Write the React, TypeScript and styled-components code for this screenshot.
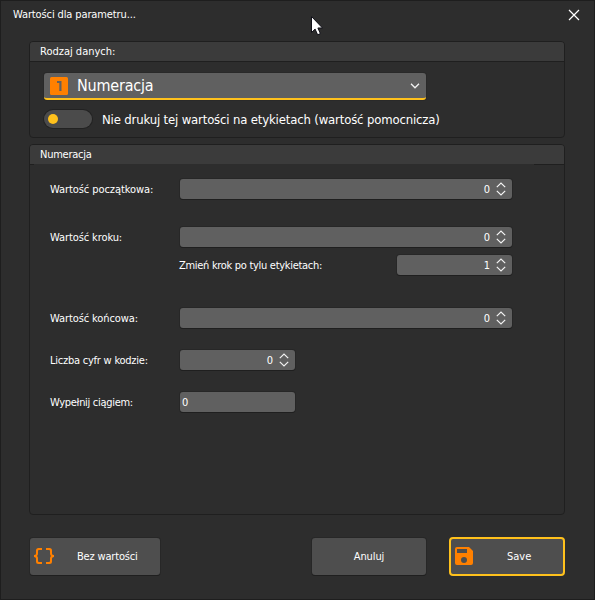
import React from 'react';
import styled, { createGlobalStyle } from 'styled-components';

const GlobalStyle = createGlobalStyle`
  * { box-sizing: border-box; }
  body { margin: 0; background: #2d2d2d; }
`;

const Dialog = styled.div`
  position: relative;
  width: 595px;
  height: 600px;
  background: #2d2d2d;
  border: 1px solid #1e1e1e;
  color: #fff;
  font: 11px/16px "DejaVu Sans Condensed", "Noto Sans", sans-serif;
  display: flex;
  flex-direction: column;
  overflow: hidden;
`;

const TitleBar = styled.header`
  height: 40px;
  flex: none;
  display: flex;
  justify-content: space-between;
  padding: 6px 14px 0 12px;
`;

const CloseButton = styled.button`
  width: 12px;
  height: 12px;
  margin-top: 2px;
  padding: 0;
  border: 0;
  background: none;
  svg { display: block; }
`;

const Text = styled.span<{ $track?: number }>`
  letter-spacing: ${p => p.$track ?? 0}px;
  white-space: nowrap;
`;

const Panel = styled.section<{ $height: number }>`
  width: 536px;
  height: ${p => p.$height}px;
  flex: none;
  margin: 0 0 6px 28px;
  border: 1px solid #1f1f1f;
  border-radius: 4px;
  overflow: hidden;
`;

const PanelHeader = styled.div<{ $broken?: boolean }>`
  height: 20px;
  padding: 2px 0 0 10px;
  background: ${p => p.$broken
    ? 'linear-gradient(90deg, #1f1f1f 4px, #3b3b3b00 4px, #3b3b3b00 504px, #1f1f1f 504px) 0 19px / 100% 1px no-repeat, linear-gradient(#3b3b3b, #3b3b3b) 0 0 / 100% 19px no-repeat'
    : 'linear-gradient(#1f1f1f, #1f1f1f) 0 19px / 100% 1px no-repeat, #3b3b3b'};
`;

const TypeBody = styled.div`
  padding: 11px 0 0 14px;
`;

const Select = styled.div`
  width: 382px;
  height: 27px;
  display: flex;
  align-items: center;
  padding: 0 6px 0 6px;
  background: #606060;
  border-radius: 3px;
  border-bottom: 2px solid #ffc11c;
  box-shadow: 0 0 0 1px #292929;
  font: 16px/24px "DejaVu Sans Condensed", "Noto Sans", sans-serif;
  svg { display: block; flex: none; }
`;

const SelectLabel = styled.span`
  flex: 1;
  padding: 1px 0 0 9px;
  letter-spacing: -0.2px;
`;

const ToggleRow = styled.label`
  display: flex;
  align-items: center;
  height: 20px;
  margin-top: 9px;
  font-size: 13px;
  gap: 10px;
  ${Text} { padding-top: 2px; }
`;

const Toggle = styled.span`
  width: 48px;
  height: 18px;
  padding: 4px;
  border-radius: 9px;
  background: #4b4b4b;
  flex: none;
  box-shadow: 0 0 0 1px #222;
  &::after {
    content: "";
    display: block;
    width: 10px;
    height: 10px;
    border-radius: 50%;
    background: #ffc11c;
  }
`;

const FormBody = styled.div`
  padding: 14px 0 0 20px;
`;

const FormRow = styled.div<{ $gap: number }>`
  display: grid;
  grid-template-columns: 130px 332px;
  height: 20px;
  align-items: center;
  margin-bottom: ${p => p.$gap}px;
  ${Text} { padding-top: 1px; line-height: 17px; }
`;

const NestedRow = styled.div`
  grid-column: 2;
  display: flex;
  justify-content: space-between;
  align-items: center;
  margin-left: -1px;
`;

const Field = styled.div<{ $width: number; $left?: boolean }>`
  width: ${p => p.$width}px;
  height: 20px;
  display: flex;
  align-items: center;
  justify-content: ${p => (p.$left ? 'flex-start' : 'flex-end')};
  gap: 6px;
  padding: ${p => (p.$left ? '0 2px' : '0 6px 0 0')};
  border-radius: 3px;
  background: #606060;
  box-shadow: 0 1px 0 #1f1f1f, 0 0 0 1px #272727;
`;

const Footer = styled.footer`
  display: flex;
  align-items: center;
  height: 40px;
  margin: 15px 0 0 29px;
`;

const Button = styled.button<{ $width: number; $primary?: boolean; $offset?: number; $pad?: number }>`
  width: ${p => p.$width}px;
  height: ${p => (p.$primary ? 39 : 37)}px;
  margin: 0 0 0 ${p => p.$offset ?? 0}px;
  padding: 0 0 0 ${p => p.$pad ?? 0}px;
  display: flex;
  align-items: center;
  justify-content: ${p => (p.$pad === undefined ? 'center' : 'flex-start')};
  border: ${p => (p.$primary ? '2px solid #ffc11c' : '0')};
  border-radius: ${p => (p.$primary ? 4 : 3)}px;
  background: #4e4e4e;
  box-shadow: ${p => (p.$primary ? 'none' : '0 1px 0 #1f1f1f, 0 0 0 1px #272727')};
  color: inherit;
  font: inherit;
  svg { display: block; flex: none; }
  ${Text} { padding-top: 2px; }
`;

const ButtonText = styled(Text)<{ $indent: number }>`
  margin-left: ${p => p.$indent}px;
  padding-top: 2px;
`;

const Cursor = styled.svg`
  position: absolute;
  left: 310px;
  top: 15px;
`;

const Arrows = () => (
  <svg width="10" height="14" viewBox="0 0 10 14" fill="none" stroke="#f2f2f2" strokeWidth="1.2">
    <path d="M.8 5.200 5 1l4.200 4.200M.8 8.800 5 13l4.200-4.200" />
  </svg>
);

const Spin = ({ width, value }: { width: number; value: string }) => (
  <Field $width={width}>
    <Text>{value}</Text>
    <Arrows />
  </Field>
);

export default function App() {
  return (
    <>
      <GlobalStyle />
      <Dialog>
        <TitleBar>
          <Text $track={-0.12}>Wartości dla parametru...</Text>
          <CloseButton aria-label="Zamknij">
            <svg width="12" height="12" viewBox="0 0 12 12" stroke="#fff" strokeWidth="1.2">
              <path d="m1 1 10 10M11 1 1 11" />
            </svg>
          </CloseButton>
        </TitleBar>

        <Panel $height={97}>
          <PanelHeader><Text>Rodzaj danych:</Text></PanelHeader>
          <TypeBody>
            <Select>
              <svg width="18" height="18" viewBox="0 0 18 18">
                <rect width="18" height="18" rx="1.5" fill="#ff8000" />
                <path d="M7 4h4.500v10h-2.200V6H7z" fill="#606060" />
              </svg>
              <SelectLabel>Numeracja</SelectLabel>
              <svg width="10" height="6" viewBox="0 0 10 6" fill="none" stroke="#f2f2f2" strokeWidth="1.3">
                <path d="m1 .8 4 4 4-4" />
              </svg>
            </Select>
            <ToggleRow>
              <Toggle />
              <Text $track={-0.16}>Nie drukuj tej wartości na etykietach (wartość pomocnicza)</Text>
            </ToggleRow>
          </TypeBody>
        </Panel>

        <Panel $height={371}>
          <PanelHeader $broken><Text $track={-0.25}>Numeracja</Text></PanelHeader>
          <FormBody>
            <FormRow $gap={28}>
              <Text $track={-0.08}>Wartość początkowa:</Text>
              <Spin width={332} value="0" />
            </FormRow>
            <FormRow $gap={8}>
              <Text $track={-0.1}>Wartość kroku:</Text>
              <Spin width={332} value="0" />
            </FormRow>
            <FormRow $gap={33}>
              <NestedRow>
                <Text $track={-0.3}>Zmień krok po tylu etykietach:</Text>
                <Spin width={115} value="1" />
              </NestedRow>
            </FormRow>
            <FormRow $gap={22}>
              <Text $track={-0.1}>Wartość końcowa:</Text>
              <Spin width={332} value="0" />
            </FormRow>
            <FormRow $gap={22}>
              <Text $track={-0.23}>Liczba cyfr w kodzie:</Text>
              <Spin width={115} value="0" />
            </FormRow>
            <FormRow $gap={0}>
              <Text $track={-0.3}>Wypełnij ciągiem:</Text>
              <Field $width={115} $left><Text>0</Text></Field>
            </FormRow>
          </FormBody>
        </Panel>

        <Footer>
          <Button $width={130} $pad={4}>
            <svg width="20" height="16" viewBox="0 0 20 16" fill="#ff8000">
              <path d="M8 0H4.500Q2 0 2 2.500V5.500Q2 7 0 7V9Q2 9 2 10.500V13.500Q2 16 4.500 16H8V14H5Q4 14 4 13V10.500Q4 8.700 3 8Q4 7.300 4 5.500V3Q4 2 5 2H8z" />
              <path d="M12 0H15.500Q18 0 18 2.500V5.500Q18 7 20 7V9Q18 9 18 10.500V13.500Q18 16 15.500 16H12V14H15Q16 14 16 13V10.500Q16 8.700 17 8Q16 7.300 16 5.500V3Q16 2 15 2H12z" />
            </svg>
            <ButtonText $indent={23} $track={-0.18}>Bez wartości</ButtonText>
          </Button>
          <Button $width={114} $offset={152}><Text $track={-0.1}>Anuluj</Text></Button>
          <Button $width={116} $offset={23} $primary $pad={4}>
            <svg width="18" height="18" viewBox="0 0 18 18" fill="#ff8000">
              <path fillRule="evenodd" d="M2 0h12l4 4v12q0 2-2 2H2q-2 0-2-2V2q0-2 2-2zM2 2v4h10V2zM9 10a3 3 0 1 0 0 6 3 3 0 0 0 0-6z" />
            </svg>
            <ButtonText $indent={34}>Save</ButtonText>
          </Button>
        </Footer>

        <Cursor width="14" height="21" viewBox="0 0 14 21">
          <path d="M.5.5v16l3.600-3.400 2.500 5.700 2.800-1.200-2.500-5.600h4.600z" fill="#fff" stroke="#101018" />
        </Cursor>
      </Dialog>
    </>
  );
}
